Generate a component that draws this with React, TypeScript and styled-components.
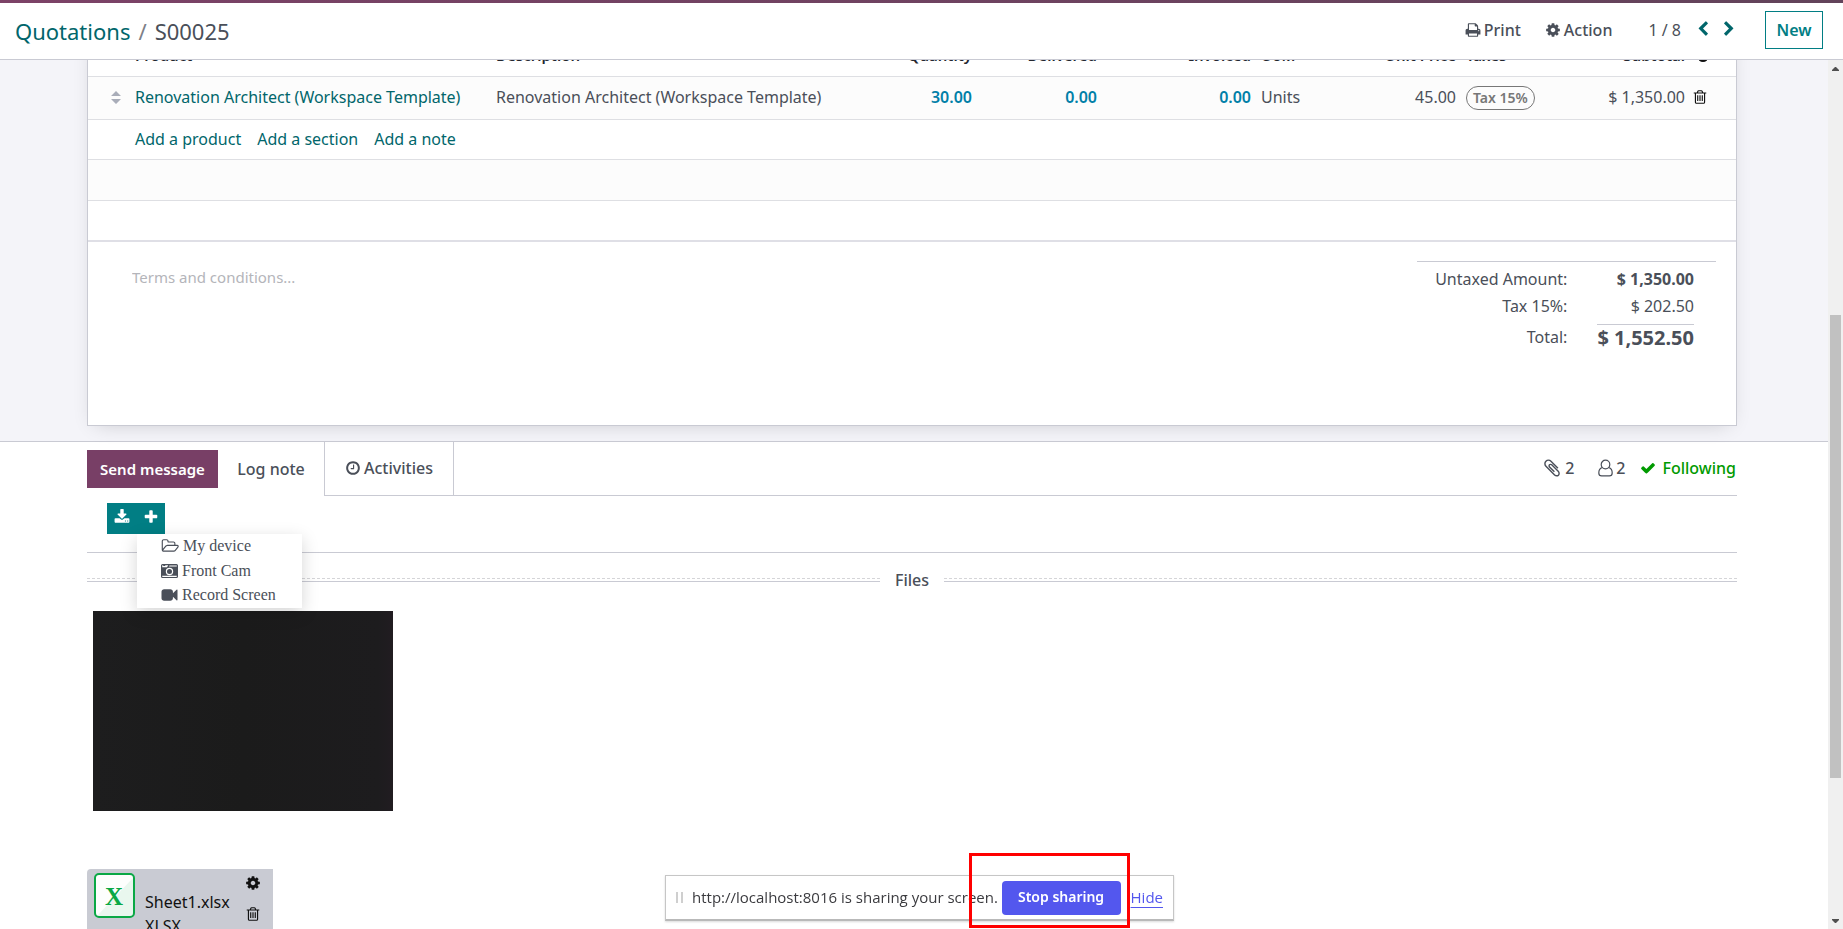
import React from 'react';
import styled, { createGlobalStyle, css } from 'styled-components';

const color = {
  text: '#4a4f59',
  strong: '#23262f',
  link: '#01666b',
  teal: '#017e84',
  plum: '#783f66',
  line: '#c9cad3',
  rowLine: '#dedfe3',
  info: '#0180a8',
  green: '#009a00',
};

const GlobalStyle = createGlobalStyle`
  * { box-sizing: border-box; }
  body {
    margin: 0;
    overflow: hidden;
    background: #fff;
    color: ${color.text};
    font: 400 16px/24px "Noto Sans", "Open Sans", sans-serif;
  }
  button, textarea { font: inherit; color: inherit; }
  a { text-decoration: none; }
`;

/* ---------- icons ---------- */

const paths = {
  chevronLeft:
    'M1427 301l-531 531 531 531q19 19 19 45t-19 45l-166 166q-19 19-45 19t-45-19l-742-742q-19-19-19-45t19-45l742-742q19-19 45-19t45 19l166 166q19 19 19 45t-19 45z',
  chevronRight:
    'M1363 877l-742 742q-19 19-45 19t-45-19l-166-166q-19-19-19-45t19-45l531-531-531-531q-19-19-19-45t19-45l166-166q19-19 45-19t45 19l742 742q19 19 19 45t-19 45z',
  print:
    'M448 1536h896v-256h-896v256zm0-640h896v-384h-160q-40 0-68-28t-28-68v-160h-640v640zm1152 64q0-26-19-45t-45-19-45 19-19 45 19 45 45 19 45-19 19-45zm128 0v416q0 13-9.5 22.5t-22.5 9.5h-224v160q0 40-28 68t-68 28h-960q-40 0-68-28t-28-68v-160h-224q-13 0-22.5-9.5t-9.5-22.5v-416q0-79 56.5-135.5t135.5-56.5h64v-544q0-40 28-68t68-28h672q40 0 88 20t76 48l152 152q28 28 48 76t20 88v256h64q79 0 135.5 56.5t56.5 135.5z',
  cog: 'M1152 896q0-106-75-181t-181-75-181 75-75 181 75 181 181 75 181-75 75-181zm512-109v222q0 12-8 23t-20 13l-185 28q-19 54-39 91 35 50 107 138 10 12 10 25t-9 23q-27 37-99 108t-94 71q-12 0-26-9l-138-108q-44 23-91 38-16 136-29 186-7 28-36 28h-222q-14 0-24.5-8.5t-11.5-21.5l-28-184q-49-16-90-37l-141 107q-10 9-25 9-14 0-25-11-126-114-165-168-7-10-7-23 0-12 8-23 15-21 51-66.5t54-70.5q-27-50-41-99l-183-27q-13-2-21-12.5t-8-23.5v-222q0-12 8-23t19-13l186-28q14-46 39-92-40-57-107-138-10-12-10-24 0-10 9-23 26-36 98.5-107.5t94.5-71.5q13 0 26 10l138 107q44-23 91-38 16-136 29-186 7-28 36-28h222q14 0 24.5 8.5t11.5 21.5l28 184q49 16 90 37l142-107q9-9 24-9 13 0 25 10 129 119 165 170 7 8 7 22 0 12-8 23-15 21-51 66.5t-54 70.5q26 50 41 98l183 28q13 2 21 12.5t8 23.5z',
  trash:
    'M704 736v576q0 14-9 23t-23 9h-64q-14 0-23-9t-9-23v-576q0-14 9-23t23-9h64q14 0 23 9t9 23zm256 0v576q0 14-9 23t-23 9h-64q-14 0-23-9t-9-23v-576q0-14 9-23t23-9h64q14 0 23 9t9 23zm256 0v576q0 14-9 23t-23 9h-64q-14 0-23-9t-9-23v-576q0-14 9-23t23-9h64q14 0 23 9t9 23zm128 724v-948h-896v948q0 22 7 40.5t14.5 27 10.5 8.5h832q3 0 10.5-8.5t14.5-27 7-40.5zm-672-1076h448l-48-117q-7-9-17-11h-317q-10 2-17 11zm928 32v64q0 14-9 23t-23 9h-96v948q0 83-47 143.5t-113 60.5h-832q-66 0-113-58.5t-47-141.5v-952h-96q-14 0-23-9t-9-23v-64q0-14 9-23t23-9h309l70-167q15-37 54-63t79-26h320q40 0 79 26t54 63l70 167h309q14 0 23 9t9 23z',
  clock:
    'M1024 544v448q0 14-9 23t-23 9h-320q-14 0-23-9t-9-23v-64q0-14 9-23t23-9h224v-352q0-14 9-23t23-9h64q14 0 23 9t9 23zm416 352q0-148-73-273t-198-198-273-73-273 73-198 198-73 273 73 273 198 198 273 73 273-73 198-198 73-273zm224 0q0 209-103 385.5t-279.5 279.5-385.5 103-385.5-103-279.5-279.5-103-385.5 103-385.5 279.5-279.5 385.5-103 385.5 103 279.5 279.5 103 385.5z',
  check:
    'M1671 566q0 40-28 68l-724 724-136 136q-28 28-68 28t-68-28l-136-136-362-362q-28-28-28-68t28-68l136-136q28-28 68-28t68 28l294 295 656-657q28-28 68-28t68 28l136 136q28 28 28 68z',
  plus: 'M1600 736v192q0 40-28 68t-68 28h-416v416q0 40-28 68t-68 28h-192q-40 0-68-28t-28-68v-416h-416q-40 0-68-28t-28-68v-192q0-40 28-68t68-28h416v-416q0-40 28-68t68-28h192q40 0 68 28t28 68v416h416q40 0 68 28t28 68z',
  download:
    'M1344 1344q0-26-19-45t-45-19-45 19-19 45 19 45 45 19 45-19 19-45zm256 0q0-26-19-45t-45-19-45 19-19 45 19 45 45 19 45-19 19-45zm128-224v320q0 40-28 68t-68 28h-1472q-40 0-68-28t-28-68v-320q0-40 28-68t68-28h465l135 136q58 56 136 56t136-56l136-136h464q40 0 68 28t28 68zm-325-569q17 41-14 70l-448 448q-18 19-45 19t-45-19l-448-448q-31-29-14-70 17-39 59-39h256v-448q0-26 19-45t45-19h256q26 0 45 19t19 45v448h256q42 0 59 39z',
  folder:
    'M1845 931q0-35-53-35h-1088q-40 0-85.5 21.5t-71.5 52.5l-294 363q-18 24-18 40 0 35 53 35h1088q40 0 86-22t71-53l294-363q18-22 18-39zm-1141-163h768v-160q0-40-28-68t-68-28h-576q-40 0-68-28t-28-68v-64q0-40-28-68t-68-28h-320q-40 0-68 28t-28 68v853l256-315q44-53 116-87.5t140-34.5zm1269 163q0 62-46 120l-295 363q-43 53-116 87.5t-140 34.5h-1088q-92 0-158-66t-66-158v-960q0-92 66-158t158-66h320q92 0 158 66t66 158v32h544q92 0 158 66t66 158v160h192q54 0 99 24.5t67 70.5q15 32 15 68z',
  video:
    'M1792 352v1088q0 42-39 59-13 5-25 5-27 0-45-19l-403-403v166q0 119-84.5 203.5t-203.5 84.5h-704q-119 0-203.5-84.5t-84.5-203.5v-704q0-119 84.5-203.5t203.5-84.5h704q119 0 203.5 84.5t84.5 203.5v165l403-402q18-19 45-19 12 0 25 5 39 17 39 59z',
  paperclip:
    'M1596 1385q0 117-79 196t-196 79q-135 0-235-100l-777-776q-113-115-113-271 0-159 110-270t269-111q158 0 273 113l605 606q10 10 10 22 0 16-30.5 46.5t-46.5 30.5q-13 0-23-10l-606-607q-79-77-181-77-106 0-179 75t-73 181q0 105 76 181l776 777q63 63 145 63 64 0 106-42t42-106q0-82-63-145l-581-581q-26-24-60-24-29 0-48 19t-19 48q0 32 25 59l410 410q10 10 10 22 0 16-31 47t-47 31q-12 0-22-10l-410-410q-63-61-63-149 0-82 57-139t139-57q88 0 149 63l581 581q100 98 100 235z',
};

const Svg = styled.svg`
  display: block;
  flex: none;
  fill: currentColor;
`;

type IconProps = { name: keyof typeof paths; size?: number; box?: string; width?: number };

const Icon = ({ name, size = 16, box = '0 0 1792 1792', width }: IconProps) => (
  <Svg width={width ?? size} height={size} viewBox={box} aria-hidden="true">
    <path d={paths[name]} />
  </Svg>
);

const CameraIcon = () => (
  <Svg width="17" height="16" viewBox="0 0 17 16" aria-hidden="true">
    <path
      fillRule="evenodd"
      d="M1.500 1.000H15.500Q17 1 17 2.500V13.500Q17 15 15.500 15H1.500Q0 15 0 13.500V2.500Q0 1 1.500 1zM1.200 4.200H6L7.200 2.200H1.500Q1.200 2.200 1.200 2.600zM8 3.400H15.800V2.400H8.500zM1.200 12.800V13.500Q1.200 13.900 1.600 13.900H15.400Q15.800 13.900 15.800 13.500V12.800zM8.500 4.800A3.700 3.700 0 1 0 8.500 12.200A3.700 3.700 0 1 0 8.500 4.800zM8.500 6A2.500 2.500 0 1 1 8.500 11A2.500 2.500 0 1 1 8.500 6z"
    />
    <path d="M2.200 2h2v1h-2z" />
    <path d="M7.200 8.700A1.400 1.400 0 0 1 8.600 7.200" fill="none" stroke="currentColor" />
  </Svg>
);

const UserIcon = () => (
  <Svg width="15" height="18" viewBox="0 0 15 18" aria-hidden="true">
    <g fill="none" stroke="currentColor" strokeWidth="1.200">
      <circle cx="7.500" cy="5.500" r="4.300" />
      <path d="M4.300 8.500C1.800 9.200.8 11.500.8 14c0 2 1.200 2.900 2.800 2.900h7.800c1.600 0 2.800-.9 2.800-2.900 0-2.500-1-4.800-3.500-5.500" />
    </g>
  </Svg>
);

const SlidersIcon = () => (
  <Svg width="18" height="16" viewBox="0 0 18 16" aria-hidden="true">
    <path d="M0 2h9v2H0zM13 2h5v2h-5zM10 0h3v6h-3zM0 11h5v2H0zM12 11h6v2h-6zM4 9.500h8v4q-4 3-8 0z" />
  </Svg>
);

const HandleIcon = () => (
  <Svg width="10" height="13" viewBox="0 0 10 13" aria-hidden="true">
    <path d="M5 0l5 5H0zM5 13l5-5H0z" />
  </Svg>
);

/* ---------- page frame ---------- */

const Page = styled.div`
  display: flex;
  flex-direction: column;
  height: 100vh;
`;

const TopBar = styled.header`
  position: relative;
  z-index: 1;
  flex: none;
  display: flex;
  align-items: center;
  height: 60px;
  padding: 0 20px 0 15px;
  background: #fff;
  border-bottom: 1px solid ${color.line};

  &::before {
    content: '';
    position: absolute;
    inset: 0 0 auto;
    height: 3px;
    background: linear-gradient(90deg, #7c4267, #62435a);
  }
`;

const Crumbs = styled.nav`
  flex: 1;
  display: flex;
  gap: 8px;
  padding-top: 2px;
  font-size: 22px;
  line-height: 30px;

  a { color: ${color.link}; }
  i { font-style: normal; color: #7d7f88; }
`;

const TopActions = styled.div`
  display: flex;
  align-items: center;
  padding-top: 3px;
`;

const MenuButton = styled.button`
  display: flex;
  align-items: center;
  gap: 3px;
  margin-right: 24px;
  padding: 0 0 2px;
  border: 0;
  background: none;
  font-weight: 500;
`;

const Pager = styled.div`
  display: flex;
  align-items: center;
  gap: 10px;
  margin: 0 28px 0 12px;
  padding-bottom: 2px;
`;

const PagerButton = styled.button`
  padding: 0 0 2px;
  border: 0;
  background: none;
  color: ${color.link};
`;

const PagerCount = styled.span`
  margin-right: 4px;
`;

const NewButton = styled.button`
  width: 58px;
  height: 38px;
  padding: 0;
  border: 1px solid ${color.teal};
  background: #fff;
  color: ${color.teal};
  font-weight: 600;
`;

const Body = styled.div`
  flex: 1;
  min-height: 0;
  display: flex;
`;

const Content = styled.main`
  flex: 1;
  min-width: 0;
  overflow: hidden;
`;

const ScrollTrack = styled.div`
  flex: none;
  display: flex;
  flex-direction: column;
  width: 15px;
  background: #f0f0f0;
`;

const ScrollArrow = styled.div<{ $down?: boolean }>`
  display: grid;
  place-items: center;
  height: 17px;
  color: #4f4f4f;
  svg { ${p => p.$down && css`transform: rotate(180deg);`} }
`;

const ScrollSpace = styled.div<{ $grow: number }>`
  flex: ${p => p.$grow} 0 0;
`;

const ScrollThumb = styled.div`
  flex: 463 0 0;
  margin: 0 2px;
  background: #c1c1c1;
`;

/* ---------- order form ---------- */

const FormArea = styled.section`
  padding: 0 91px 15px 87px;
  background: #f4f4f9;
  border-bottom: 1px solid ${color.line};
`;

const Sheet = styled.div`
  margin-top: -25px;
  background: #fff;
  border: 1px solid ${color.line};
  box-shadow: 0 5px 20px -8px rgba(0, 0, 0, 0.2);
`;

const LinesTable = styled.table`
  width: 100%;
  table-layout: fixed;
  border-collapse: separate;
  border-spacing: 0;

  th, td {
    padding: 0 5px 2px;
    text-align: left;
    white-space: nowrap;
    border-bottom: 1px solid ${color.rowLine};
  }
  th { height: 41px; font-size: 15px; font-weight: 600; color: ${color.strong}; }
  tbody tr:nth-child(odd) { background: #fcfcfc; }
  tbody tr:last-child td { border-bottom: 2px solid #dfdfe6; }
`;

const Col = styled.col<{ $w?: number }>`
  ${p => p.$w && css`width: ${p.$w}px;`}
`;

const Row = styled.tr<{ $h: number }>`
  height: ${p => p.$h}px;
`;

const NumHead = styled.th`
  && { text-align: right; }
`;

const Num = styled.td<{ $info?: boolean }>`
  && { text-align: right; }
  ${p => p.$info && css`color: ${color.info}; font-weight: 600;`}
`;

const HandleCell = styled.td`
  color: #a9adb9;
  svg { margin-left: 18px; }
`;

const ProductLink = styled.a`
  color: ${color.link};
`;

const AddLinks = styled.div`
  display: flex;
  gap: 16px;
  a { color: ${color.link}; }
`;

const TaxBadge = styled.span`
  display: inline-block;
  padding: 0 6px;
  border: 1px solid #777;
  border-radius: 12px;
  color: #777;
  font-size: 14px;
  font-weight: 600;
  line-height: 22px;
  vertical-align: middle;
`;

const IconButton = styled.button`
  display: block;
  padding: 0;
  border: 0;
  background: none;
  color: #111;
`;

const TrashCell = styled.td`
  && { padding-left: 2px; }
`;

const SheetFooter = styled.div`
  display: flex;
  justify-content: space-between;
  padding: 19px 20px 74px 44px;
`;

const Terms = styled.textarea`
  flex: 1;
  height: 60px;
  padding: 4px 0 0;
  border: 0;
  outline: 0;
  resize: none;
  font-size: 15px;
  &::placeholder { color: #b4b5ba; opacity: 1; }
`;

const Totals = styled.dl`
  display: grid;
  grid-template-columns: 1fr auto;
  column-gap: 30px;
  width: 299px;
  margin: 0;
  padding: 4px 22px 0 0;
  border-top: 1px solid ${color.line};
  text-align: right;
  line-height: 27px;

  dd { margin: 0; }
`;

const Amount = styled.dd<{ $kind?: 'bold' | 'total' }>`
  ${p => p.$kind && css`font-weight: 700;`}
  ${p => p.$kind === 'total' && css`
    && { margin-top: 4px; }
    font-size: 20px;
    line-height: 25px;
    padding-bottom: 1px;
    border-top: 1px solid ${color.line};
  `}
`;

const TotalLabel = styled.dt`
  padding-top: 4px;
`;

/* ---------- chatter ---------- */

const Chatter = styled.section`
  padding: 0 91px 0 87px;
`;

const ChatterBar = styled.div`
  display: flex;
  height: 54px;
  font-weight: 500;
`;

const Compose = styled.div`
  display: flex;
  padding-top: 8px;
`;

const ComposeButton = styled.button<{ $primary?: boolean }>`
  width: ${p => (p.$primary ? 131 : 106)}px;
  height: 38px;
  padding: 0 0 1px;
  border: 0;
  font-size: ${p => (p.$primary ? 15 : 16)}px;
  font-weight: ${p => (p.$primary ? 600 : 500)};
  color: ${p => (p.$primary ? '#fff' : 'inherit')};
  background: ${p => (p.$primary ? color.plum : 'none')};
`;

const ActivitiesButton = styled.button`
  display: flex;
  align-items: center;
  justify-content: center;
  gap: 3px;
  width: 130px;
  padding: 0 0 2px;
  border: solid ${color.line};
  border-width: 0 1px 1px;
  background: none;
  font-weight: 500;
`;

const Followers = styled.div`
  flex: 1;
  display: flex;
  align-items: center;
  justify-content: flex-end;
  padding-bottom: 2px;
  border-bottom: 1px solid ${color.line};
`;

const CountButton = styled.button`
  display: flex;
  align-items: center;
  gap: 3px;
  margin-right: 24px;
  padding: 0;
  border: 0;
  background: none;
  font-weight: 500;

  & + & { margin-right: 15px; }
`;

const FollowingButton = styled.button`
  display: flex;
  align-items: center;
  gap: 6px;
  padding: 0 1px 0 0;
  border: 0;
  background: none;
  color: ${color.green};
  font-weight: 500;
`;

const AttachBar = styled.div`
  height: 57px;
  padding: 7px 0 0 20px;
  border-bottom: 1px solid ${color.line};
`;

const AttachGroup = styled.div`
  position: relative;
  display: flex;
  width: 58px;
  height: 31px;
  background: ${color.teal};
`;

const AttachButton = styled.button`
  flex: 1;
  display: grid;
  place-items: center;
  padding: 0 0 3px;
  border: 0;
  background: none;
  color: #fff;
`;

const AttachMenu = styled.ul`
  position: absolute;
  z-index: 2;
  top: 31px;
  left: 30px;
  width: 165px;
  margin: 0;
  padding: 0 0 1px 24px;
  list-style: none;
  background: #fff;
  box-shadow: 0 5px 16px rgba(0, 0, 0, 0.17);

  li + li { padding-top: 1px; }
  li:last-child { padding-top: 0; }
`;

const AttachItem = styled.button`
  display: flex;
  align-items: center;
  gap: 4px;
  height: 24px;
  padding: 0;
  border: 0;
  background: none;
  font: 16px/24px "Liberation Serif", serif;
`;

const FilesTitle = styled.h2`
  display: flex;
  align-items: center;
  gap: 15px;
  height: 54px;
  margin: 0;
  padding-bottom: 1px;
  font-size: 16px;
  font-weight: 500;

  &::before, &::after {
    content: '';
    flex: 1;
    height: 2px;
    border-top: 1px dashed #d5d5d8;
    border-bottom: 1px solid ${color.line};
  }
`;

const VideoPreview = styled.div`
  width: 300px;
  height: 200px;
  margin: 4px 0 0 6px;
  background: linear-gradient(90deg, #1d1d1e, #1b1b1b 50%, #1d1c1e 95%, #211c21);
`;

const FileCard = styled.div`
  display: flex;
  width: 186px;
  height: 84px;
  margin-top: 58px;
  padding: 4px 12px 4px 7px;
  border-radius: 4px 0 0 4px;
  background: #c9cbd3;
  color: #111;
`;

const FileName = styled.div`
  flex: 1;
  padding: 17px 0 0 10px;
  line-height: 24px;
`;

const FileTools = styled.div`
  display: flex;
  flex-direction: column;
  gap: 15px;
  padding-top: 2px;
`;

/* ---------- screen share notice ---------- */

const ShareLayer = styled.div`
  position: fixed;
  z-index: 3;
  inset: auto 4px 8px 0;
  display: flex;
  justify-content: center;
  pointer-events: none;
`;

const ShareBar = styled.div`
  position: relative;
  display: flex;
  align-items: center;
  width: 509px;
  height: 46px;
  padding: 0 10px;
  background: #fff;
  border: 1px solid #c6c6c6;
  border-bottom: 2px solid #b9b9b9;
  box-shadow: 0 1px 2px rgba(0, 0, 0, 0.15);
  color: #3b3b3f;
  font: 15px/20px "Open Sans", sans-serif;
  pointer-events: auto;
`;

const Grip = styled.span`
  width: 7px;
  height: 11px;
  margin-right: 9px;
  border: solid #cfcfcf;
  border-width: 0 2px;
`;

const ShareText = styled.span`
  flex: 1;
  padding-bottom: 2px;
  white-space: nowrap;
`;

const StopButton = styled.button`
  width: 119px;
  height: 34px;
  margin-right: 10px;
  padding: 0 0 1px;
  border: 0;
  border-radius: 4px;
  background: #5357ee;
  color: #fff;
  font: 600 14px/20px "Noto Sans", sans-serif;
`;

const HideLink = styled.a`
  padding-bottom: 2px;
  color: #5357ee;
  text-decoration: underline;
  text-underline-offset: 4px;
`;

const Highlight = styled.span`
  position: absolute;
  top: -23px;
  right: 43px;
  width: 161px;
  height: 75px;
  border: 3px solid #f00;
  pointer-events: none;
`;

const ExcelLogo = () => (
  <svg width="41" height="45" viewBox="0 0 41 45" role="img" aria-label="Spreadsheet">
    <rect x="1" y="1" width="39" height="43" rx="4" fill="#fdfefd" />
    <path d="M39 5v35q0 3-3 3H3z" fill="#e9f7ee" />
    <rect x="1" y="1" width="39" height="43" rx="4" fill="none" stroke="#0aa845" strokeWidth="2" />
    <text x="20" y="32" textAnchor="middle" fill="#0aa845" fontFamily="Liberation Serif, serif" fontWeight="700" fontSize="25">
      X
    </text>
  </svg>
);

const Arrow = () => (
  <Svg width="7" height="4" viewBox="0 0 7 4" aria-hidden="true">
    <path d="M3 0h1l3 3v1H0V3z" />
  </Svg>
);

export default function App() {
  return (
    <Page>
      <GlobalStyle />
      <TopBar>
        <Crumbs aria-label="Breadcrumb">
          <a href="#quotations">Quotations</a>
          <i>/</i>
          <span>S00025</span>
        </Crumbs>
        <TopActions>
          <MenuButton><Icon name="print" />Print</MenuButton>
          <MenuButton><Icon name="cog" />Action</MenuButton>
          <Pager>
            <PagerCount>1 / 8</PagerCount>
            <PagerButton aria-label="Previous"><Icon name="chevronLeft" /></PagerButton>
            <PagerButton aria-label="Next"><Icon name="chevronRight" /></PagerButton>
          </Pager>
        </TopActions>
        <NewButton>New</NewButton>
      </TopBar>

      <Body>
        <Content>
          <FormArea>
            <Sheet>
              <LinesTable>
                <colgroup>
                  <Col $w={42} />
                  <Col $w={361} />
                  <Col />
                  <Col $w={125} />
                  <Col $w={125} />
                  <Col $w={154} />
                  <Col $w={110} />
                  <Col $w={95} />
                  <Col $w={140} />
                  <Col $w={89} />
                  <Col $w={46} />
                </colgroup>
                <thead>
                  <tr>
                    <th />
                    <th>Product</th>
                    <th>Description</th>
                    <NumHead>Quantity</NumHead>
                    <NumHead>Delivered</NumHead>
                    <NumHead>Invoiced</NumHead>
                    <th>UoM</th>
                    <NumHead>Unit Price</NumHead>
                    <th>Taxes</th>
                    <NumHead>Subtotal</NumHead>
                    <th><IconButton aria-label="Optional columns"><SlidersIcon /></IconButton></th>
                  </tr>
                </thead>
                <tbody>
                  <Row $h={43}>
                    <HandleCell><HandleIcon /></HandleCell>
                    <td><ProductLink href="#product">Renovation Architect (Workspace Template)</ProductLink></td>
                    <td>Renovation Architect (Workspace Template)</td>
                    <Num $info>30.00</Num>
                    <Num $info>0.00</Num>
                    <Num $info>0.00</Num>
                    <td>Units</td>
                    <Num>45.00</Num>
                    <td><TaxBadge>Tax 15%</TaxBadge></td>
                    <Num>$ 1,350.00</Num>
                    <TrashCell><IconButton aria-label="Delete line"><Icon name="trash" /></IconButton></TrashCell>
                  </Row>
                  <Row $h={40}>
                    <td />
                    <td colSpan={10}>
                      <AddLinks>
                        <a href="#add-product">Add a product</a>
                        <a href="#add-section">Add a section</a>
                        <a href="#add-note">Add a note</a>
                      </AddLinks>
                    </td>
                  </Row>
                  <Row $h={41}><td colSpan={11} /></Row>
                  <Row $h={41}><td colSpan={11} /></Row>
                </tbody>
              </LinesTable>
              <SheetFooter>
                <Terms placeholder="Terms and conditions..." aria-label="Terms and conditions" />
                <Totals>
                  <dt>Untaxed Amount:</dt>
                  <Amount $kind="bold">$ 1,350.00</Amount>
                  <dt>Tax 15%:</dt>
                  <Amount>$ 202.50</Amount>
                  <TotalLabel>Total:</TotalLabel>
                  <Amount $kind="total">$ 1,552.50</Amount>
                </Totals>
              </SheetFooter>
            </Sheet>
          </FormArea>

          <Chatter>
            <ChatterBar>
              <Compose>
                <ComposeButton $primary>Send message</ComposeButton>
                <ComposeButton>Log note</ComposeButton>
              </Compose>
              <ActivitiesButton><Icon name="clock" />Activities</ActivitiesButton>
              <Followers>
                <CountButton aria-label="2 attachments"><Icon name="paperclip" size={20} />2</CountButton>
                <CountButton aria-label="2 followers"><UserIcon />2</CountButton>
                <FollowingButton><Icon name="check" />Following</FollowingButton>
              </Followers>
            </ChatterBar>

            <AttachBar>
              <AttachGroup>
                <AttachButton aria-label="Download"><Icon name="download" /></AttachButton>
                <AttachButton aria-label="Add attachment"><Icon name="plus" /></AttachButton>
                <AttachMenu>
                  <li><AttachItem><Icon name="folder" width={18} box="0 0 1984 1792" />My device</AttachItem></li>
                  <li><AttachItem><CameraIcon />Front Cam</AttachItem></li>
                  <li><AttachItem><Icon name="video" width={17} />Record Screen</AttachItem></li>
                </AttachMenu>
              </AttachGroup>
            </AttachBar>

            <FilesTitle>Files</FilesTitle>
            <VideoPreview />
            <FileCard>
              <ExcelLogo />
              <FileName>
                <div>Sheet1.xlsx</div>
                <div>XLSX</div>
              </FileName>
              <FileTools>
                <IconButton aria-label="File settings"><Icon name="cog" /></IconButton>
                <IconButton aria-label="Delete file"><Icon name="trash" /></IconButton>
              </FileTools>
            </FileCard>
          </Chatter>
        </Content>

        <ScrollTrack>
          <ScrollArrow><Arrow /></ScrollArrow>
          <ScrollSpace $grow={238} />
          <ScrollThumb />
          <ScrollSpace $grow={134} />
          <ScrollArrow $down><Arrow /></ScrollArrow>
        </ScrollTrack>
      </Body>

      <ShareLayer>
        <ShareBar>
          <Grip />
          <ShareText>http://localhost:8016 is sharing your screen.</ShareText>
          <StopButton>Stop sharing</StopButton>
          <HideLink href="#hide">Hide</HideLink>
          <Highlight />
        </ShareBar>
      </ShareLayer>
    </Page>
  );
}
